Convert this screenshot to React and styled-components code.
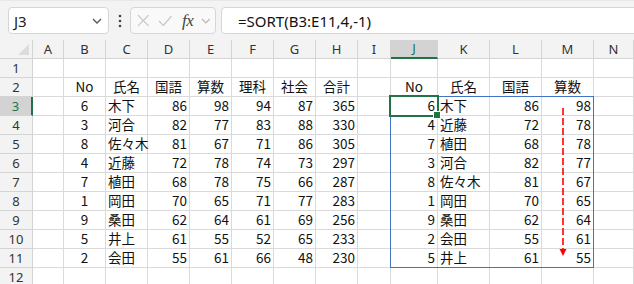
import React from "react";
import styled, { createGlobalStyle } from "styled-components";

const GlobalStyle = createGlobalStyle`
  html, body {
    margin: 0;
    padding: 0;
    background: #fff;
    overflow: hidden;
  }
  * {
    box-sizing: border-box;
  }
`;

const GREEN = "#217346";
const GRID = "#dadada";

const letters = ["A", "B", "C", "D", "E", "F", "G", "H", "I", "J", "K", "L", "M", "N"];

// data alignment per column
const colAlign = {
  B: "center",
  C: "left",
  D: "right",
  E: "right",
  F: "right",
  G: "right",
  H: "right",
  J: "right",
  K: "left",
  L: "right",
  M: "right",
};

const headers = {
  B: "No",
  C: "氏名",
  D: "国語",
  E: "算数",
  F: "理科",
  G: "社会",
  H: "合計",
  J: "No",
  K: "氏名",
  L: "国語",
  M: "算数",
};

const original = [
  [6, "木下", 86, 98, 94, 87, 365],
  [3, "河合", 82, 77, 83, 88, 330],
  [8, "佐々木", 81, 67, 71, 86, 305],
  [4, "近藤", 72, 78, 74, 73, 297],
  [7, "植田", 68, 78, 75, 66, 287],
  [1, "岡田", 70, 65, 71, 77, 283],
  [9, "桑田", 62, 64, 61, 69, 256],
  [5, "井上", 61, 55, 52, 65, 233],
  [2, "会田", 55, 61, 66, 48, 230],
];

const sorted = [
  [6, "木下", 86, 98],
  [4, "近藤", 72, 78],
  [7, "植田", 68, 78],
  [3, "河合", 82, 77],
  [8, "佐々木", 81, 67],
  [1, "岡田", 70, 65],
  [9, "桑田", 62, 64],
  [2, "会田", 55, 61],
  [5, "井上", 61, 55],
];

const cellValue = (row, col) => {
  if (row === 2) return headers[col] || "";
  if (row < 3 || row > 11) return "";
  const i = row - 3;
  const li = "BCDEFGH".indexOf(col);
  if (li >= 0) return original[i][li];
  const ri = "JKLM".indexOf(col);
  if (ri >= 0) return sorted[i][ri];
  return "";
};

const Page = styled.div`
  width: 634px;
  height: 284px;
  overflow: hidden;
  background: #fff;
`;

const FormulaBar = styled.div`
  height: 40px;
  background: #f3f3f3;
  display: flex;
  align-items: flex-start;
  padding: 6px 0 0 8px;
  border-top: 1px solid #e8e8e8;
`;

const Box = styled.div`
  height: 27px;
  background: ${(p) => p.$bg || "#fff"};
  border: 1px solid #d6d6d6;
  border-radius: 4px;
  display: flex;
  align-items: center;
`;

const NameBox = styled(Box)`
  width: 101px;
  justify-content: space-between;
  padding: 0 6px 0 5px;
  font-family: "Noto Sans", "Liberation Sans", sans-serif;
  font-size: 15px;
  color: #222;
`;

const Dots = styled.div`
  width: 21px;
  height: 27px;
  display: flex;
  align-items: center;
  justify-content: center;
`;

const FxBox = styled(Box)`
  width: 86px;
  padding: 0 4px 0 6px;
  gap: 8px;
`;

const Fx = styled.span`
  font-family: "Liberation Serif", "DejaVu Serif", serif;
  font-style: italic;
  font-size: 17px;
  color: #444;
  margin-left: 2px;
  letter-spacing: -0.5px;
`;

const FormulaInput = styled(Box)`
  flex: 1;
  margin-left: 5px;
  margin-right: -10px;
  padding-left: 16px;
  font-family: "Noto Sans", "Liberation Sans", sans-serif;
  font-size: 15px;
  color: #111;
`;

const Sheet = styled.div`
  position: relative;
  display: grid;
  grid-template-columns: 33px 31px repeat(7, 42px) 33px 47px repeat(3, 52px) 1fr;
  grid-auto-rows: 19px;
`;

const Head = styled.div`
  background: ${(p) => (p.$active ? "#d3d3d3" : "#f3f3f3")};
  color: ${(p) => (p.$active ? GREEN : "#333")};
  border-right: ${(p) => (p.$rowActive ? `2px solid ${GREEN}` : "1px solid #d4d4d4")};
  border-bottom: ${(p) => (p.$colActive ? `2px solid ${GREEN}` : "1px solid #d4d4d4")};
  font-family: "Noto Sans", "Liberation Sans", sans-serif;
  font-size: 13px;
  display: flex;
  align-items: center;
  justify-content: center;
  line-height: 1;
`;

const Corner = styled(Head)`
  position: relative;
  &::after {
    content: "";
    position: absolute;
    right: 3px;
    bottom: 3px;
    border-style: solid;
    border-width: 0 0 11px 11px;
    border-color: transparent transparent #dcdcdc transparent;
  }
`;

const Cell = styled.div`
  border-right: 1px solid ${GRID};
  border-bottom: 1px solid ${GRID};
  font-family: "Noto Sans CJK JP", "Noto Sans", sans-serif;
  font-size: 13.5px;
  color: #111;
  display: flex;
  align-items: center;
  justify-content: ${(p) =>
    p.$align === "right" ? "flex-end" : p.$align === "left" ? "flex-start" : "center"};
  padding: 0 2px 0 2px;
  white-space: nowrap;
  overflow: visible;
  line-height: 1;
`;

const RangeFrame = styled.div`
  position: absolute;
  left: 390px;
  top: 56px;
  width: 204px;
  height: 172px;
  border: 1.5px solid #4472c4;
  pointer-events: none;
`;

const ActiveCell = styled.div`
  position: absolute;
  left: 389px;
  top: 55px;
  width: 50px;
  height: 22px;
  border: 2px solid ${GREEN};
  pointer-events: none;
  &::after {
    content: "";
    position: absolute;
    right: -4px;
    bottom: -4px;
    width: 6px;
    height: 6px;
    background: ${GREEN};
    border: 1px solid #fff;
  }
`;

const Arrow = styled.svg`
  position: absolute;
  left: 558px;
  top: 64px;
  pointer-events: none;
`;

const Chevron = ({ color = "#444" }) => (
  <svg width="10" height="6" viewBox="0 0 10 6">
    <polyline points="1,1 5,5 9,1" fill="none" stroke={color} strokeWidth="1.3" />
  </svg>
);

export default function App() {
  const rows = Array.from({ length: 12 }, (_, i) => i + 1);
  return (
    <Page>
      <GlobalStyle />
      <FormulaBar>
        <NameBox>
          <span>J3</span>
          <Chevron color="#555" />
        </NameBox>
        <Dots>
          <svg width="4" height="14" viewBox="0 0 4 14">
            <circle cx="2" cy="2" r="1.3" fill="#444" />
            <circle cx="2" cy="7" r="1.3" fill="#444" />
            <circle cx="2" cy="12" r="1.3" fill="#444" />
          </svg>
        </Dots>
        <FxBox $bg="#f9f9f9">
          <svg width="13" height="13" viewBox="0 0 13 13">
            <path d="M1 1 L12 12 M12 1 L1 12" stroke="#c4c4c4" strokeWidth="1.2" />
          </svg>
          <svg width="15" height="12" viewBox="0 0 15 12">
            <polyline points="1,6 5.5,10.5 14,1" fill="none" stroke="#c4c4c4" strokeWidth="1.2" />
          </svg>
          <Fx>fx</Fx>
          <Chevron color="#b8b8b8" />
        </FxBox>
        <FormulaInput>=SORT(B3:E11,4,-1)</FormulaInput>
      </FormulaBar>

      <Sheet>
        <Corner />
        {letters.map((l) => (
          <Head key={l} $active={l === "J"} $colActive={l === "J"}>
            {l}
          </Head>
        ))}
        {rows.map((r) => (
          <React.Fragment key={r}>
            <Head $active={r === 3} $rowActive={r === 3}>
              {r}
            </Head>
            {letters.map((l) => (
              <Cell key={l} $align={r === 2 ? "center" : colAlign[l]}>
                {cellValue(r, l)}
              </Cell>
            ))}
          </React.Fragment>
        ))}
        <RangeFrame />
        <ActiveCell />
        <Arrow width="10" height="156" viewBox="0 0 10 156">
          <line x1="5" y1="4" x2="5" y2="146" stroke="#ff0000" strokeWidth="1.6" strokeDasharray="7 3" />
          <polygon points="1.5,145 8.5,145 5,152" fill="#ff0000" />
        </Arrow>
      </Sheet>
    </Page>
  );
}
